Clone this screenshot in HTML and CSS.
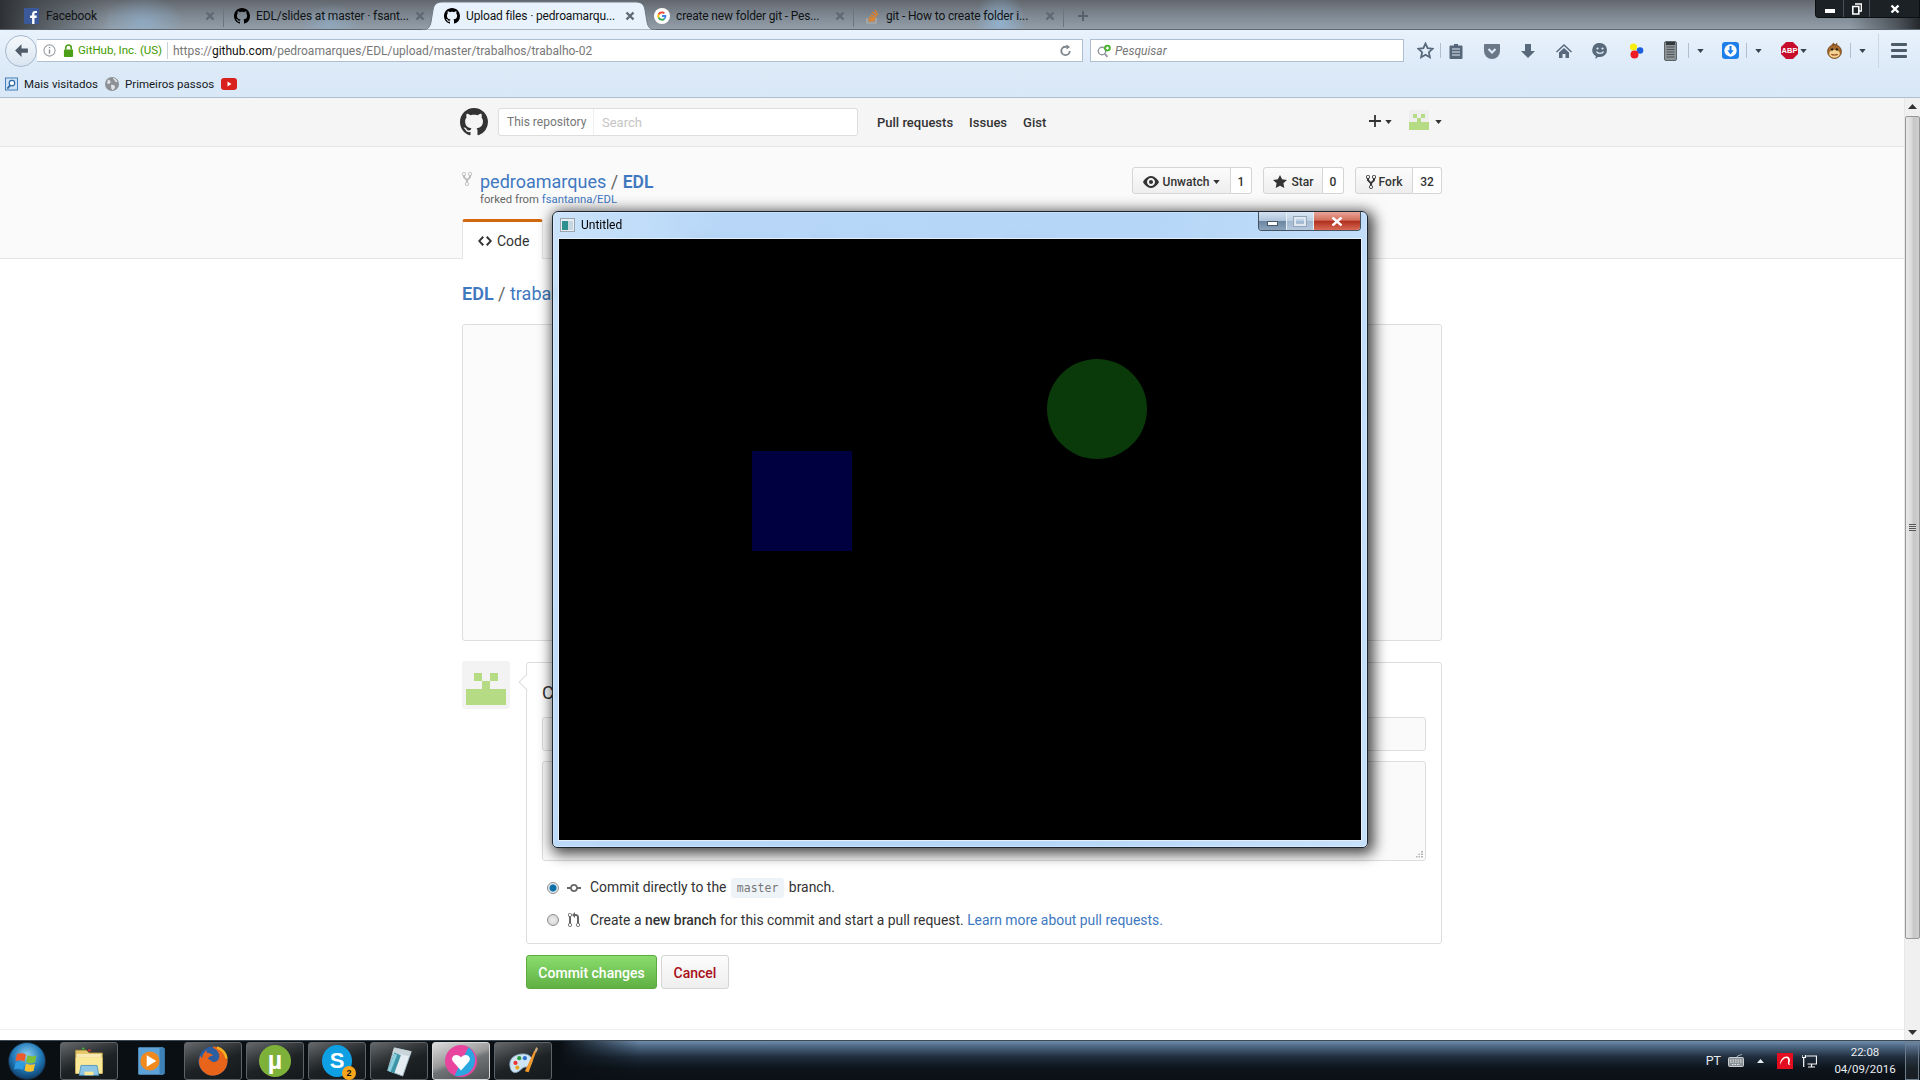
FILE: index.html
```html
<!DOCTYPE html>
<html lang="pt">
<head>
<meta charset="utf-8">
<title>Upload files · pedroamarques/EDL</title>
<link rel="stylesheet" href="styles.css">
</head>
<body>
<svg class="defs" width="0" height="0" aria-hidden="true">
  <symbol id="gh" viewBox="0 0 16 16"><path d="M8 0C3.58 0 0 3.58 0 8c0 3.54 2.29 6.53 5.47 7.59.4.07.55-.17.55-.38 0-.19-.01-.82-.01-1.49-2.01.37-2.53-.49-2.69-.94-.09-.23-.48-.94-.82-1.13-.28-.15-.68-.52-.01-.53.63-.01 1.08.58 1.23.82.72 1.21 1.87.87 2.33.66.07-.52.28-.87.51-1.07-1.78-.2-3.64-.89-3.64-3.95 0-.87.31-1.59.82-2.15-.08-.2-.36-1.02.08-2.12 0 0 .67-.21 2.2.82.64-.18 1.32-.27 2-.27.68 0 1.36.09 2 .27 1.53-1.04 2.2-.82 2.2-.82.44 1.1.16 1.92.08 2.12.51.56.82 1.27.82 2.15 0 3.07-1.87 3.75-3.65 3.95.29.25.54.73.54 1.48 0 1.07-.01 1.93-.01 2.2 0 .21.15.46.55.38A8.013 8.013 0 0016 8c0-4.42-3.58-8-8-8z"/></symbol>
  <symbol id="fork" viewBox="0 0 10 16"><path d="M8 1a1.993 1.993 0 00-1 3.72V6L5 8 3 6V4.72A1.993 1.993 0 002 1a1.993 1.993 0 00-1 3.72V6.5l3 3v1.78A1.993 1.993 0 005 15a1.993 1.993 0 001-3.72V9.5l3-3V4.72A1.993 1.993 0 008 1zM2 4.2C1.34 4.2.8 3.65.8 3c0-.65.55-1.2 1.2-1.2.65 0 1.2.55 1.2 1.2 0 .65-.55 1.2-1.2 1.2zm3 10c-.66 0-1.2-.55-1.2-1.2 0-.65.55-1.2 1.2-1.2.65 0 1.2.55 1.2 1.2 0 .65-.55 1.2-1.2 1.2zm3-10c-.66 0-1.2-.55-1.2-1.2 0-.65.55-1.2 1.2-1.2.65 0 1.2.55 1.2 1.2 0 .65-.55 1.2-1.2 1.2z"/></symbol>
  <symbol id="x" viewBox="0 0 10 10"><path d="M1.5 1.5l7 7M8.5 1.5l-7 7" stroke="#5f6973" stroke-width="2.4" fill="none"/></symbol>
  <symbol id="dd" viewBox="0 0 8 5"><path d="M0 0h8L4 5z"/></symbol>
  <symbol id="ident" viewBox="0 0 40 40"><path d="M8 8h8v8H8zM24 8h8v8h-8zM16 16h8v8h-8zM0 24h40v16H0z"/></symbol>
</svg>

<div class="screen">
  <header class="tabstrip">
    <div class="tab tab-sep">
      <svg class="fav" viewBox="0 0 16 16"><rect width="15" height="16" fill="#3b5998"/><path d="M10.5 16v-6h2l.3-2.4h-2.3V6.2c0-.7.2-1.1 1.2-1.1h1.200V3c-.3 0-1-.1-1.800-.1-1.800 0-3 1.100-3 3.100v1.600h-2V10h2v6z" fill="#fff"/></svg>
      <span class="tab-title">Facebook</span>
      <svg class="tab-x"><use href="#x"/></svg>
    </div>
    <div class="tab">
      <svg class="fav"><use href="#gh"/></svg>
      <span class="tab-title">EDL/slides at master · fsant...</span>
      <svg class="tab-x"><use href="#x"/></svg>
    </div>
    <div class="tab tab-active">
      <svg class="tab-shape" viewBox="0 0 234 30" preserveAspectRatio="none"><path d="M0 30c6 0 8-3 9-8l2-12c1-6 4-8 10-8h192c6 0 9 2 10 8l2 12c1 5 3 8 9 8z" fill="#e8f2fc" stroke="#6f7a85" stroke-width="1"/></svg>
      <svg class="fav"><use href="#gh"/></svg>
      <span class="tab-title">Upload files · pedroamarqu...</span>
      <svg class="tab-x"><use href="#x"/></svg>
    </div>
    <div class="tab tab-sep">
      <svg class="fav" viewBox="0 0 16 16"><circle cx="8" cy="8" r="8" fill="#fff"/><path d="M8 3.500a4.500 4.500 0 0 1 3 1.200l-1.300 1.300A2.700 2.700 0 0 0 5.400 7L3.900 5.800A4.500 4.500 0 0 1 8 3.500z" fill="#ea4335"/><path d="M3.900 5.800L5.400 7a2.800 2.800 0 0 0 0 2L3.900 10.200a4.500 4.500 0 0 1 0-4.400z" fill="#fbbc05"/><path d="M5.400 9A2.700 2.700 0 0 0 9.700 10.200L11 11.400A4.500 4.500 0 0 1 3.900 10.200z" fill="#34a853"/><path d="M8 7.100h4.300a4.600 4.600 0 0 1-1.300 4.300L9.700 10.200c.4-.3.600-.7.800-1.300H8z" fill="#4285f4"/></svg>
      <span class="tab-title">create new folder git - Pes...</span>
      <svg class="tab-x"><use href="#x"/></svg>
    </div>
    <div class="tab tab-sep">
      <svg class="fav" viewBox="0 0 16 16"><path d="M3 10v5h9v-5" fill="none" stroke="#b5b2a8" stroke-width="1.200"/><path d="M4.500 12.500h6M4.700 10.800l6 .5M5.300 8.800l5.800 1.500M6.500 6.500l5.300 2.800M8.500 4l4.300 4M11 2l2.800 5" stroke="#e58325" stroke-width="1.300" fill="none"/></svg>
      <span class="tab-title">git - How to create folder i...</span>
      <svg class="tab-x"><use href="#x"/></svg>
    </div>
    <svg class="newtab" viewBox="0 0 12 12"><path d="M6 1v10M1 6h10" stroke="#56616c" stroke-width="2"/></svg>
    <div class="winctl">
      <span class="wc wc-min"><i></i></span>
      <span class="wc wc-max"><svg viewBox="0 0 10 12"><path d="M3 1h6.500v7H7M.8 3.500h6v7.500h-6z" fill="none" stroke="#fff" stroke-width="1.600"/></svg></span>
      <span class="wc wc-close"><svg viewBox="0 0 10 10"><path d="M1.500 1.500l7 7M8.500 1.500l-7 7" stroke="#fff" stroke-width="2.400"/></svg></span>
    </div>
  </header>

  <nav class="toolbar">
    <span class="backbtn"><svg viewBox="0 0 16 16"><path d="M8 2L2 8l6 6v-4h6V6H8z" fill="#4f5b68"/></svg></span>
    <div class="urlbar">
      <svg class="ub-info" viewBox="0 0 14 14"><circle cx="7" cy="7" r="6" fill="none" stroke="#9aa0a6" stroke-width="1.200"/><path d="M7 6v4.500M7 3.200v1.500" stroke="#8a9096" stroke-width="1.500"/></svg>
      <svg class="ub-lock" viewBox="0 0 12 14"><path d="M3 6V4a3 3 0 0 1 6 0v2" fill="none" stroke="#4c9f17" stroke-width="1.800"/><rect x="1" y="6" width="10" height="8" rx="1" fill="#4c9f17"/></svg>
      <span class="ub-org">GitHub, Inc. (US)</span>
      <span class="ub-url">https://<b>github.com</b>/pedroamarques/EDL/upload/master/trabalhos/trabalho-02</span>
      <svg class="ub-reload" viewBox="0 0 14 14"><path d="M11.500 7.500A4.500 4.500 0 1 1 7 3h1.500" fill="none" stroke="#7d858d" stroke-width="2"/><path d="M8 .5l4 2.700L8 6z" fill="#7d858d"/></svg>
    </div>
    <div class="searchbar">
      <svg class="sb-ico" viewBox="0 0 18 16"><circle cx="6" cy="8" r="4.500" fill="none" stroke="#8c949c" stroke-width="1.600"/><path d="M9.500 11.500l3 3.500" stroke="#8c949c" stroke-width="2"/><circle cx="12.500" cy="4.500" r="4" fill="#48b02c"/><path d="M12.500 2.500v4M10.500 4.500h4" stroke="#fff" stroke-width="1.300"/></svg>
      <span class="sb-text">Pesquisar</span>
    </div>
    <div class="tools">
      <span class="ti w30"><svg class="i18" viewBox="0 0 16 16"><path d="M8 1.500l2 4.300 4.600.6-3.400 3.200.9 4.700L8 12l-4.100 2.300.9-4.700L1.400 6.400 6 5.800z" fill="none" stroke="#58697b" stroke-width="1.700"/></svg></span>
      <span class="tsep"></span>
      <span class="ti w30"><svg class="i16" viewBox="0 0 14 16"><path d="M5 1h4v1.500h3.500a1 1 0 0 1 1 1V15a1 1 0 0 1-1 1h-11a1 1 0 0 1-1-1V3.500a1 1 0 0 1 1-1H5z" fill="#56677a"/><path d="M3 6h8M3 9h8M3 12h8" stroke="#dde9f5"/></svg></span>
      <span class="ti w36 ml3"><svg class="i16" viewBox="0 0 16 16"><path d="M1 1h14a1 1 0 0 1 1 1v6a8 8 0 0 1-16 0V2a1 1 0 0 1 1-1z" fill="#6a7786"/><path d="M4.500 6L8 9.500 11.500 6" fill="none" stroke="#dbe8f5" stroke-width="2.200"/></svg></span>
      <span class="ti w36"><svg class="i16" viewBox="0 0 16 16"><path d="M5 1h6v7h4l-7 7-7-7h4z" fill="#58697b"/></svg></span>
      <span class="ti w36"><svg class="i16" viewBox="0 0 16 16"><path d="M8 1L0 8.500l1 1L8 3l7 6.500 1-1zM3 9.500V15h3.500v-4h3v4H13V9.500L8 5z" fill="#58697b"/></svg></span>
      <span class="ti w36"><svg class="i16" viewBox="0 0 16 16"><path d="M8 0a7 7 0 0 1 0 14H6l-2.500 2 .3-3A7 7 0 0 1 8 0z" fill="#58697b"/><circle cx="5.500" cy="5.500" r="1.100" fill="#e2edf8"/><circle cx="10.500" cy="5.500" r="1.100" fill="#e2edf8"/><path d="M4.500 8.500c1 2.500 6 2.500 7 0" fill="none" stroke="#e2edf8" stroke-width="1.300"/></svg></span>
      <span class="ti w35"><svg class="i16" viewBox="0 0 16 16"><circle cx="5.500" cy="4" r="3.600" fill="#f7ee10"/><circle cx="12" cy="7.500" r="3.300" fill="#1a5fe0"/><circle cx="6.500" cy="11.500" r="4" fill="#ee1c25"/></svg></span>
      <span class="ti w35"><svg class="i20" viewBox="0 0 13 20"><rect x=".5" y=".5" width="12" height="19" rx="1.500" fill="#8e9598" stroke="#5d6467"/><rect x="2" y="1" width="9" height="3" fill="#33383b"/><path d="M2.500 6h8M2.500 8.500h8M2.500 11h8M2.500 13.500h8M2.500 16h8" stroke="#4c5357"/></svg></span>
      <span class="tsep"></span>
      <span class="ti w20"><svg class="dd"><use href="#dd"/></svg></span>
      <span class="ti w32 ml3"><svg class="i18" viewBox="0 0 16 16"><rect width="16" height="16" rx="3" fill="#1e7fe8"/><circle cx="8" cy="8" r="5.800" fill="#fff"/><path d="M7 3.800h2v4h2L8 11.800 5 7.800h2z" fill="#1e7fe8"/></svg></span>
      <span class="tsep"></span>
      <span class="ti w20"><svg class="dd"><use href="#dd"/></svg></span>
      <span class="ti abp-slot"><span class="abp">ABP</span><svg class="dd"><use href="#dd"/></svg></span>
      <span class="ti w32 ml3"><svg class="i18" viewBox="0 0 16 16"><path d="M5 3L7 .5 8.500 2.500 10.500 .5 10.500 3z" fill="#8a5a25"/><circle cx="8" cy="9" r="6.500" fill="#a5682a" stroke="#6c4218" stroke-width=".8"/><ellipse cx="8" cy="11" rx="5" ry="3.800" fill="#f5d28f"/><circle cx="5.800" cy="7" r="1.100" fill="#221"/><circle cx="10.200" cy="7" r="1.100" fill="#221"/><path d="M5 11.500c1.500 1 4.500 1 6 0" stroke="#8a3a18" fill="none"/></svg></span>
      <span class="tsep"></span>
      <span class="ti w20"><svg class="dd"><use href="#dd"/></svg></span>
      <span class="tsep tsep-tall"></span>
      <span class="menu"><i></i><i></i><i></i></span>
    </div>
  </nav>

  <div class="bookmarks">
    <svg class="bm-ico" viewBox="0 0 14 14"><rect x=".5" y=".5" width="13" height="13" fill="#cfe2f5" stroke="#3d78b5"/><circle cx="7.500" cy="6" r="3" fill="#fff" stroke="#2b66a5" stroke-width="1.300"/><path d="M5.500 8.500L2.500 12" stroke="#2b66a5" stroke-width="1.800"/></svg>
    <span class="bm-label">Mais visitados</span>
    <svg class="bm-ico bm-globe" viewBox="0 0 14 14"><circle cx="7" cy="7" r="7" fill="#8d9195"/><path d="M3 2.500c2 .5 3 1.500 2.500 3S3 7 2 6.500zM8 1c2 0 4 2 4.500 4-1.500.5-2.500-.5-3-1.500S8 2 8 1zM6 8c2-.5 4 .5 4 2s-1.500 3-2.500 3S6 10 6 8z" fill="#dfe3e6"/></svg>
    <span class="bm-label">Primeiros passos</span>
    <svg class="bm-yt" viewBox="0 0 16 12"><rect width="16" height="12" rx="3" fill="#d8201d"/><path d="M6.500 3.500l4 2.500-4 2.500z" fill="#fff"/></svg>
  </div>

  <div class="viewport">
    <main class="page">
      <div class="gh-header">
        <div class="container header-row">
          <svg class="gh-logo"><use href="#gh"/></svg>
          <div class="gh-search">
            <span class="scope">This repository</span>
            <span class="search-ph">Search</span>
          </div>
          <a class="gh-nav first">Pull requests</a>
          <a class="gh-nav">Issues</a>
          <a class="gh-nav">Gist</a>
          <svg class="gh-plus" viewBox="0 0 12 12"><path d="M6 0v12M0 6h12" stroke="#333" stroke-width="1.800"/></svg>
          <svg class="caret"><use href="#dd"/></svg>
          <svg class="mini-avatar"><use href="#ident"/></svg>
          <svg class="caret"><use href="#dd"/></svg>
        </div>
      </div>

      <div class="repohead">
        <div class="container">
          <div class="repo-row">
            <div class="repo-title">
              <svg class="repo-fork"><use href="#fork"/></svg>
              <div>
                <h1 class="repo-name"><a>pedroamarques</a> <span class="slash">/</span> <a><b>EDL</b></a></h1>
                <p class="forked">forked from <a>fsantanna/EDL</a></p>
              </div>
            </div>
            <div class="repo-actions">
              <div class="btngrp"><span class="btn btn-watch"><svg class="b-eye" viewBox="0 0 16 16"><path d="M8.060 2C3 2 0 8 0 8s3 6 8.060 6C13 14 16 8 16 8s-3-6-7.940-6zM8 12c-2.200 0-4-1.780-4-4 0-2.200 1.800-4 4-4 2.220 0 4 1.800 4 4 0 2.220-1.780 4-4 4zm2-4c0 1.110-.89 2-2 2-1.110 0-2-.89-2-2 0-1.110.89-2 2-2 1.110 0 2 .89 2 2z"/></svg>Unwatch<svg class="caret b-caret"><use href="#dd"/></svg></span><span class="count c-watch">1</span></div>
              <div class="btngrp"><span class="btn btn-star"><svg class="b-star" viewBox="0 0 14 16"><path d="M14 6l-4.900-.64L7 1 4.900 5.360 0 6l3.600 3.260L2.670 14 7 11.670 11.330 14l-.93-4.740L14 6z"/></svg>Star</span><span class="count c-star">0</span></div>
              <div class="btngrp"><span class="btn btn-fork"><svg class="b-fork"><use href="#fork"/></svg>Fork</span><span class="count c-fork">32</span></div>
            </div>
          </div>
          <div class="repo-tabs">
            <a class="rtab rtab-on"><svg class="rt-code" viewBox="0 0 14 16"><path d="M9.500 3L8 4.500 11.500 8 8 11.500 9.500 13 14 8 9.500 3zm-5 0L0 8l4.500 5L6 11.500 2.500 8 6 4.500 4.500 3z"/></svg>Code</a>
            <a class="rtab">Pull requests 0</a>
            <a class="rtab">Wiki</a>
            <a class="rtab">Pulse</a>
            <a class="rtab">Graphs</a>
            <a class="rtab">Settings</a>
          </div>
        </div>
      </div>

      <div class="container">
        <div class="crumb"><a><b>EDL</b></a> <span class="slash">/</span> <a>trabalhos</a> <span class="slash">/</span> <a>trabalho-02</a></div>
        <div class="dropzone"></div>
        <div class="commit">
          <div class="avatar"><svg class="avatar-img"><use href="#ident"/></svg></div>
          <div class="commit-col">
            <form class="commit-form">
              <h3 class="commit-h">Commit changes</h3>
              <div class="fake-input"></div>
              <div class="fake-area"><svg class="grip" viewBox="0 0 7 7"><path d="M5 0h2v1.500H5zM2.500 2.500h1.500V4H2.500zM5 2.500h2V4H5zM0 5h1.500v1.500H0zM2.500 5h1.500v1.500H2.500zM5 5h2v1.500H5z" fill="#b5b5b5"/></svg></div>
              <div class="radio-row first-radio">
                <span class="radio radio-on"></span>
                <svg class="r-ico" viewBox="0 0 14 16"><path d="M10.860 7c-.45-1.720-2-3-3.860-3-1.860 0-3.410 1.280-3.860 3H0v2h3.140c.45 1.720 2 3 3.860 3 1.860 0 3.410-1.280 3.860-3H14V7h-3.140zM7 10.200c-1.220 0-2.200-.98-2.200-2.200 0-1.220.98-2.200 2.200-2.200 1.220 0 2.200.98 2.200 2.200 0 1.220-.98 2.200-2.200 2.200z"/></svg>
                <span>Commit directly to the <code class="branch">master</code> branch.</span>
              </div>
              <div class="radio-row">
                <span class="radio"></span>
                <svg class="r-ico r-pr" viewBox="0 0 12 16"><path d="M11 11.280V5c-.03-.78-.34-1.470-.94-2.060C9.460 2.350 8.780 2.030 8 2H7V0L4 3l3 3V4h1c.27.02.48.11.69.31.21.2.3.42.31.69v6.280A1.993 1.993 0 0010 15a1.993 1.993 0 001-3.720zm-1 2.920c-.66 0-1.200-.55-1.200-1.200 0-.65.55-1.200 1.200-1.200.65 0 1.200.55 1.200 1.200 0 .65-.55 1.200-1.200 1.200zM4 3c0-1.110-.89-2-2-2a1.993 1.993 0 00-1 3.720v6.560A1.993 1.993 0 002 15a1.993 1.993 0 001-3.720V4.720c.59-.34 1-.98 1-1.720zm-.8 10c0 .66-.55 1.200-1.200 1.200-.65 0-1.200-.55-1.200-1.200 0-.65.55-1.200 1.200-1.200.65 0 1.200.55 1.200 1.200zM2 4.200C1.340 4.200.8 3.650.8 3c0-.65.55-1.200 1.200-1.200.65 0 1.200.55 1.200 1.200 0 .65-.55 1.200-1.200 1.200z"/></svg>
                <span>Create a <b>new branch</b> for this commit and start a pull request. <a class="link">Learn more about pull requests.</a></span>
              </div>
            </form>
            <div class="form-actions">
              <span class="btn-primary">Commit changes</span>
              <span class="btn-cancel">Cancel</span>
            </div>
          </div>
        </div>
      </div>
      <div class="page-foot"></div>
    </main>
    <aside class="scrollbar">
      <svg class="sb-arrow" viewBox="0 0 9 5"><path d="M4.500 0L9 5H0z"/></svg>
      <div class="thumb"><span class="thumb-grip"></span></div>
      <svg class="sb-arrow" viewBox="0 0 9 5"><path d="M0 0h9L4.500 5z"/></svg>
    </aside>
  </div>

  <footer class="taskbar">
    <svg class="orb" viewBox="0 0 38 38">
      <defs><radialGradient id="orbg" cx=".5" cy=".35" r=".7"><stop offset="0" stop-color="#8fd0f0"/><stop offset=".55" stop-color="#1f78b8"/><stop offset="1" stop-color="#0b2f55"/></radialGradient></defs>
      <circle cx="19" cy="19" r="18.500" fill="url(#orbg)" stroke="#16293d"/>
      <path d="M9 12c3-1 6-1 9 .5l-1.500 7c-3-1.500-6-1.500-9-.5z" fill="#ef5a2a"/>
      <path d="M19.500 13c3 1.500 6 1.500 9 .5l-1.500 7c-3 1-6 1-9-.5z" fill="#7cbf3a"/>
      <path d="M7.500 20.500c3-1 6-1 9 .5l-1.500 7c-3-1.500-6-1.500-9-.5z" fill="#2f9be0"/>
      <path d="M18 21.500c3 1.500 6 1.500 9 .5l-1.500 7c-3 1-6 1-9-.5z" fill="#f8c22e"/>
    </svg>
    <span class="tb tb-btn"><svg class="tb-ico" viewBox="0 0 34 36"><path d="M2 6h12l3 3h15v23H2z" fill="#e5c76a" stroke="#b89a44"/><path d="M3 10h28v4H3z" fill="#f6e9b2"/><rect x="9" y="3" width="3" height="2" fill="#3fae3c"/><rect x="16" y="5" width="3" height="2" fill="#d33"/><path d="M2 14h30v18H2z" fill="#fbe99a"/><path d="M8 23h18l2 11H6z" fill="#8ec6e6" stroke="#4f93bb"/><path d="M12 30h10v4H12z" fill="#fbe99a"/></svg></span>
    <span class="tb tb-plain"><svg class="tb-ico" viewBox="0 0 30 30"><rect x="3" y="2" width="24" height="26" rx="1" fill="#5da3d8"/><rect x="23" y="3" width="5" height="24" fill="#3d80b5"/><circle cx="14" cy="15" r="9" fill="#f08a1e"/><path d="M11 9.500l9 5.500-9 5.500z" fill="#fff"/></svg></span>
    <span class="tb tb-btn"><svg class="tb-ico" viewBox="0 0 32 32"><circle cx="16" cy="16" r="14.500" fill="#2b5ea0"/><path d="M16 1.500a14.500 14.500 0 0 1 13 21c-4 8-15 10.500-21 5.500-6-4-7.500-12-4.500-17 .5 1 1 1.500 1.500 2 .5-3 2-6 5-8-1 2.500 0 3 1 3 2 0 4 1 5 3-3-.5-5 1-5 3 3 .5 3 3 6 3 4 0 6-4 5-8-1-3-3-5-6-6z" fill="#e8641b"/><path d="M20 2.500c5 1.500 9 6 9.500 11" stroke="#f6b01e" stroke-width="2.500" fill="none"/></svg></span>
    <span class="tb tb-btn"><span class="utorrent">µ</span></span>
    <span class="tb tb-btn"><span class="skype">S<em>2</em></span></span>
    <span class="tb tb-btn"><svg class="tb-ico" viewBox="0 0 32 34"><path d="M11 3l18 4-9 26-16-6z" fill="#e4eef2" stroke="#9fb6c2"/><path d="M11 3l18 4-2 5-18-4z" fill="#c9d5da"/><path d="M4 27L11 8l7 3-7 19z" fill="#3f95a8"/><path d="M11 9l3 1.500-7 18-3-1.500z" fill="#8bd0de"/></svg></span>
    <span class="tb tb-btn tb-on"><svg class="tb-ico" viewBox="0 0 30 30"><circle cx="15" cy="15" r="15" fill="#e8459f"/><path d="M22 2A15 15 0 0 1 9 28.500z" fill="#2aa6e0"/><path d="M15 24L7.500 15.500c-3-4 2.500-9 7.500-4 5-5 10.500 0 7.500 4z" fill="#fff"/></svg></span>
    <span class="tb tb-btn"><svg class="tb-ico" viewBox="0 0 34 32"><path d="M3 19C3 11 13 7 21 9c6 2 7 7 4 11s-6 1-9 4-6 5-9 4-4-5-4-9z" fill="#cfe4f2" stroke="#8aa9c0"/><circle cx="9" cy="18" r="2.200" fill="#e33"/><circle cx="13" cy="13" r="2.200" fill="#2c9b3f"/><circle cx="19" cy="13" r="2.200" fill="#2d6fd0"/><circle cx="11" cy="23" r="2.200" fill="#e8a51e"/><path d="M19 27L29 5l2 1-8 22z" fill="#f0982a"/><path d="M29 6l2-5 2 2-2 4z" fill="#c9a77a"/></svg></span>
    <div class="tray">
      <span class="tray-lang">PT</span>
      <svg class="tray-kb" viewBox="0 0 16 13"><path d="M9 3c0-2 3-1 5-3" fill="none" stroke="#b5bcc2"/><rect x=".5" y="3.500" width="15" height="9" rx="1" fill="#8b9297" stroke="#c6ccd1"/><path d="M2 6h12M2 8h12M4 10.500h8" stroke="#e3e6e8" stroke-dasharray="1.500 1"/></svg>
      <svg class="tray-up" viewBox="0 0 7 4"><path d="M3.500 0L7 4H0z" fill="#e8edf2"/></svg>
      <svg class="tray-av" viewBox="0 0 16 16"><rect width="16" height="16" fill="#e30d1f"/><path d="M3 12C3 6 7 3 10 3.500c3 .5 3.500 4 2.500 6-.5 1 0 2 1 2.500-2 .5-3-1-2.500-3 .5-2 0-4-2-4S4.500 8 3 12z" fill="#fff"/></svg>
      <svg class="tray-net" viewBox="0 0 15 14"><path d="M4.500 2h10v8h-9" fill="none" stroke="#f2f4f6" stroke-width="1.200"/><path d="M6 13h7M9.500 10v3" stroke="#f2f4f6" stroke-width="1.200"/><path d="M0 1v2.500h3.500V1M1.700 3.500V13" fill="none" stroke="#fff" stroke-width="1.200"/></svg>
      <div class="clock"><span>22:08</span><span>04/09/2016</span></div>
      <span class="showdesk"></span>
    </div>
  </footer>

  <section class="win">
    <div class="win-title">
      <svg class="win-ico" viewBox="0 0 15 14"><rect x=".5" y=".5" width="14" height="13" fill="#e8eef4" stroke="#9aa5af"/><rect x="2" y="3" width="6" height="9" fill="#2f8f8f"/><rect x="8" y="3" width="5" height="9" fill="#c7d6df"/></svg>
      <span class="win-name">Untitled</span>
      <div class="win-ctl">
        <span class="wb wb-min"><i></i></span>
        <span class="wb wb-max"><i></i></span>
        <span class="wb wb-close"><svg viewBox="0 0 12 9"><path d="M1.500 .5l9 8M10.500 .5l-9 8" stroke="#fff" stroke-width="2.400"/></svg></span>
      </div>
    </div>
    <div class="win-client">
      <svg class="scene" viewBox="0 0 802 601">
        <circle cx="538" cy="170" r="50" fill="#0a3a0a"/>
        <rect x="193" y="212" width="100" height="100" fill="#000040"/>
      </svg>
    </div>
  </section>
</div>
</body>
</html>
```

FILE: styles.css
```css
* { box-sizing: border-box; }
html, body { margin: 0; padding: 0; }
body { background: #fff; font-family: Roboto, "Noto Sans", "Liberation Sans", sans-serif; color: #333; }
svg { display: block; flex: none; }
a { color: #4078c0; text-decoration: none; }
.defs { position: absolute; }

.screen { position: relative; width: 1920px; height: 1080px; overflow: hidden; display: flex; flex-direction: column; }

/* browser tab strip */
.tabstrip {
  height: 30px; flex: none; display: flex; align-items: center; padding-left: 14px;
  border-bottom: 1px solid #5f6770;
  background:
    radial-gradient(ellipse 40px 26px at 143px 22px, rgba(150,195,235,.45), transparent),
    radial-gradient(ellipse 30px 20px at 330px 24px, rgba(150,195,235,.35), transparent),
    radial-gradient(ellipse 26px 30px at 1000px 22px, rgba(150,195,235,.6), transparent),
    linear-gradient(90deg, #2e3134 0, rgba(60,64,68,.8) 30px, transparent 110px),
    linear-gradient(270deg, #24282c 0, rgba(40,44,48,.6) 24px, transparent 70px),
    linear-gradient(180deg, #62676e 0, #7f8993 55%, #929ea9 100%);
}
.tab { position: relative; width: 210px; height: 30px; flex: none; display: flex; align-items: center; padding: 2px 0 0 10px; gap: 6px; font-size: 12px; color: #101214; }
.tab-sep::after { content: ""; position: absolute; right: 0; top: 5px; bottom: 3px; width: 1px; background: #6c747c; }
.tab-shape { position: absolute; left: -12px; top: 0; width: 234px; height: 30px; }
.fav { position: relative; width: 16px; height: 16px; }
.tab-title { position: relative; flex: 1; white-space: nowrap; letter-spacing: -.15px; }
.tab-x { position: relative; width: 10px; height: 10px; margin-right: 9px; }
.newtab { width: 12px; height: 12px; margin: 2px 0 0 13px; }
.winctl { margin-left: auto; align-self: flex-start; width: 105px; height: 18px; display: flex; background: #1c2125; border: 1px solid #0c0f12; border-top: 0; border-radius: 0 0 0 4px; }
.wc { height: 100%; display: flex; align-items: center; justify-content: center; border-right: 1px solid #4a5056; }
.wc-min { width: 28px; }
.wc-min i { width: 10px; height: 4px; background: #fff; margin-top: 4px; }
.wc-max { width: 26px; }
.wc-max svg { width: 10px; height: 12px; }
.wc-close { flex: 1; border-right: 0; }
.wc-close svg { width: 10px; height: 10px; }

/* navigation toolbar */
.toolbar { height: 41px; flex: none; display: flex; align-items: center; padding-left: 5px; background: linear-gradient(180deg, #e8f2fc, #dce9f7); }
.backbtn { width: 32px; height: 32px; border-radius: 50%; border: 1px solid #a6b8ca; background: linear-gradient(180deg, #f4f8fc, #d9e5f1); display: flex; align-items: center; justify-content: center; position: relative; z-index: 1; flex: none; }
.backbtn svg { width: 17px; height: 17px; }
.urlbar { width: 1046px; height: 23px; display: flex; align-items: center; background: #fff; border: 1px solid #aebfd2; border-left: 0; font-size: 12px; flex: none; }
.ub-info { width: 13px; height: 13px; margin-left: 6px; }
.ub-lock { width: 11px; height: 13px; margin-left: 7px; }
.ub-org { color: #3f9a00; font-size: 11.500px; margin-left: 4px; width: 90px; height: 17px; line-height: 17px; border-right: 1px solid #c9d2db; white-space: nowrap; }
.ub-url { color: #777; margin-left: 5px; white-space: nowrap; }
.ub-url b { color: #111; font-weight: 400; }
.ub-reload { width: 13px; height: 13px; margin-left: auto; margin-right: 10px; }
.searchbar { width: 314px; height: 23px; margin-left: 7px; display: flex; align-items: center; background: #fff; border: 1px solid #aebfd2; flex: none; padding-left: 6px; }
.sb-ico { width: 15px; height: 14px; }
.sb-text { font-size: 12px; font-style: italic; color: #777; margin-left: 3px; }
.tools { display: flex; align-items: center; margin-left: 6px; height: 100%; }
.ti { display: flex; align-items: center; justify-content: center; flex: none; height: 24px; }
.w20 { width: 22px; } .w30 { width: 30px; } .w32 { width: 32px; } .w35 { width: 35px; } .w36 { width: 36px; }
.ml3 { margin-left: 3px; }
.tsep { width: 1px; height: 15px; background: #b1c0cf; flex: none; }
.tsep-tall { height: 34px; margin-left: 5px; background: #cad8e6; }
.i16 { width: 16px; height: 16px; } .i18 { width: 17px; height: 17px; } .i20 { width: 13px; height: 20px; }
.dd { width: 7px; height: 4px; fill: #39434d; }
.abp-slot { width: 37px; gap: 2px; justify-content: flex-start; padding-left: 2px; margin-left: 10px; margin-right: -1px; }
.abp { width: 17px; height: 17px; background: #c70d2c; color: #fff; font: 700 7.500px/17px "Liberation Sans", sans-serif; text-align: center; clip-path: polygon(30% 0, 70% 0, 100% 30%, 100% 70%, 70% 100%, 30% 100%, 0 70%, 0 30%); }
.menu { width: 16px; display: flex; flex-direction: column; gap: 3px; margin-left: 12px; flex: none; }
.menu i { height: 3px; border-radius: 1px; background: #4e5c6a; }

/* bookmarks */
.bookmarks { height: 27px; flex: none; display: flex; align-items: center; padding-left: 5px; font-size: 11.500px; color: #14181c; background: linear-gradient(180deg, #dce9f7, #d9e8f7); border-bottom: 1px solid #aebfd2; }
.bm-ico { width: 13px; height: 14px; }
.bm-label { margin-left: 6px; white-space: nowrap; }
.bm-globe { margin-left: 7px; width: 14px; }
.bm-yt { width: 16px; height: 12px; margin-left: 7px; }

/* page viewport */
.viewport { flex: 1; min-height: 0; display: flex; }
.page { flex: 1; min-width: 0; overflow: hidden; font-size: 13px; }
.container { width: 980px; margin: 0 auto; }

.gh-header { height: 49px; background: #f5f5f5; border-bottom: 1px solid #e5e5e5; }
.header-row { height: 48px; display: flex; align-items: center; }
.gh-logo { width: 28px; height: 28px; margin-left: -2px; fill: #333; }
.gh-search { width: 360px; height: 28px; margin-left: 10px; display: flex; align-items: center; background: #fff; border: 1px solid #ddd; border-radius: 3px; font-size: 12px; }
.scope { width: 95px; height: 100%; line-height: 27px; padding-left: 8px; color: #767676; border-right: 1px solid #eee; white-space: nowrap; }
.search-ph { margin: 1px 0 0 8px; color: #c5c5c5; font-size: 13px; }
.gh-nav { margin: 1px 0 0 16px; color: #333; font-size: 13px; font-weight: 500; }
.gh-nav.first { margin-left: 19px; }
.gh-plus { width: 12px; height: 12px; margin-left: auto; margin-top: -3px; }
.caret { width: 7px; height: 4px; fill: #333; margin-left: 4px; }
.mini-avatar { width: 20px; height: 20px; fill: #b5db84; margin-left: 17px; margin-top: -4px; background: #eee; }
.mini-avatar + .caret { margin-left: 6px; }

.repohead { height: 112px; background: #fafafa; border-bottom: 1px solid #e5e5e5; }
.repo-row { height: 72px; display: flex; justify-content: space-between; padding-top: 20px; }
.repo-title { display: flex; gap: 8px; }
.repo-fork { width: 10px; height: 16px; fill: #bbb; margin-top: 4px; }
.repo-name { margin: 0; font-size: 18px; font-weight: 400; line-height: 30px; height: 24px; color: #666; white-space: nowrap; }
.repo-name b { font-weight: 600; font-size: 17.500px; }
.slash { color: #666; }
.forked { margin: 2px 0 0; font-size: 11.300px; line-height: 14px; color: #666; white-space: nowrap; }
.repo-actions { display: flex; gap: 11px; }
.btngrp { display: flex; height: 27px; font-size: 12px; }
.btn { display: flex; align-items: center; justify-content: center; padding-top: 2px; color: #333; font-weight: 500; background: linear-gradient(180deg, #fcfcfc, #eee); border: 1px solid #d5d5d5; border-radius: 3px 0 0 3px; }
.count { display: flex; align-items: center; justify-content: center; padding-top: 2px; background: #fff; border: 1px solid #d5d5d5; border-left: 0; border-radius: 0 3px 3px 0; color: #333; font-weight: 500; }
.btn-watch { width: 99px; } .c-watch { width: 21px; }
.btn-star { width: 60px; } .c-star { width: 21px; }
.btn-fork { width: 58px; } .c-fork { width: 29px; }
.b-eye { width: 16px; height: 16px; fill: #333; margin-right: 4px; }
.b-star { width: 14px; height: 16px; fill: #333; margin-right: 5px; }
.b-fork { width: 10px; height: 16px; fill: #333; margin-right: 3px; }
.b-caret { margin-left: 4px; }
.repo-tabs { display: flex; height: 40px; }
.rtab { display: flex; align-items: center; padding: 0 15px; color: #666; font-size: 14px; }
.rtab-on { width: 81px; color: #333; background: #fff; border: 1px solid #e5e5e5; border-top: 3px solid #d26911; border-bottom: 0; border-radius: 3px 3px 0 0; margin-right: 130px; }
.rt-code { width: 14px; height: 16px; fill: #333; margin-right: 5px; }

.crumb { margin-top: 23px; height: 24px; line-height: 24px; font-size: 18px; white-space: nowrap; }
.crumb b { font-weight: 600; }
.dropzone { height: 317px; margin-top: 18px; background: #fbfbfb; border: 1px solid #ddd; border-radius: 3px; }
.commit { display: flex; margin-top: 20px; gap: 16px; }
.avatar { width: 48px; height: 48px; padding: 4px; background: #f3f3f3; border-radius: 3px; flex: none; }
.avatar-img { width: 40px; height: 40px; fill: #b5db84; }
.commit-col { flex: 1; min-width: 0; margin-top: 1px; }
.commit-form { position: relative; height: 282px; padding: 16px 15px 0; border: 1px solid #ddd; border-radius: 3px; background: #fff; }
.commit-form::before { content: ""; position: absolute; left: -6px; top: 13px; width: 11px; height: 11px; background: #fff; border-left: 1px solid #ddd; border-bottom: 1px solid #ddd; transform: rotate(45deg); }
.commit-h { margin: 0 0 10px; font-size: 18px; font-weight: 400; line-height: 28px; }
.fake-input { height: 34px; background: #fafafa; border: 1px solid #ddd; border-radius: 3px; }
.fake-area { position: relative; height: 100px; margin-top: 10px; background: #fafafa; border: 1px solid #ddd; border-radius: 3px; }
.grip { position: absolute; right: 2px; bottom: 2px; width: 7px; height: 7px; }
.radio-row { display: flex; align-items: center; height: 22px; margin-top: 10px; font-size: 13.900px; white-space: nowrap; }
.first-radio { margin-top: 16px; }
.radio { width: 12px; height: 12px; margin-left: 5px; border-radius: 50%; border: 1px solid #8e8f8f; background: radial-gradient(circle, #eee 0, #cfcfcf 100%); flex: none; }
.radio-on { background: radial-gradient(circle, #0b6fa8 0, #0b6fa8 3px, #dfe6ec 4px, #eef1f3 100%); }
.r-ico { width: 14px; height: 16px; margin-left: 8px; margin-right: 9px; fill: #666; }
.r-pr { width: 12px; margin-left: 9px; margin-right: 10px; }
.radio-row b { font-weight: 500; }
.branch { display: inline-block; padding: 0 6px; height: 20px; margin: 0 1px; background: #eef3f8; border-radius: 3px; color: #777; font: 11.500px/21px "DejaVu Sans Mono", "Liberation Mono", monospace; }
.form-actions { display: flex; gap: 4px; margin-top: 11px; }
.btn-primary { width: 131px; height: 34px; padding-top: 1px; display: flex; align-items: center; justify-content: center; font-size: 14px; font-weight: 500; color: #fff; background: linear-gradient(180deg, #8add6d, #60b044); border: 1px solid #5ca941; border-radius: 3px; }
.btn-cancel { width: 68px; height: 34px; padding-top: 1px; display: flex; align-items: center; justify-content: center; font-size: 14px; font-weight: 500; color: #a8101a; background: linear-gradient(180deg, #fcfcfc, #eee); border: 1px solid #d5d5d5; border-radius: 3px; }
.page-foot { margin-top: 40px; border-top: 1px solid #eee; }

/* scrollbar */
.scrollbar { width: 16px; flex: none; display: flex; flex-direction: column; align-items: center; background: #f0f0f0; border-left: 1px solid #e8e8e8; }
.sb-arrow { width: 9px; height: 5px; fill: #333; margin: 6px 0 7px; flex: none; }
.thumb { width: 15px; height: 823px; display: flex; align-items: center; justify-content: center; border: 1px solid #979797; border-radius: 2px; background: linear-gradient(90deg, #e8e8e8 0, #dcdcdc 40%, #c6c6c6 60%, #cfcfcf 100%); }
.thumb-grip { width: 7px; height: 7px; background: repeating-linear-gradient(180deg, #555 0, #555 1px, #ddd 1px, #ddd 2px); }
.scrollbar .thumb + .sb-arrow { margin-top: auto; margin-bottom: 5px; }

/* taskbar */
.taskbar {
  height: 40px; flex: none; display: flex; align-items: center; padding-left: 8px; border-top: 1px solid #3d4a56;
  background:
    linear-gradient(90deg, #0a0f14 0, #0a0f14 560px, rgba(10,15,20,0) 640px),
    linear-gradient(180deg, #6f8dab 0, #4d6783 14%, #1e2c3b 42%, #0d141b 70%, #0b1016 100%);
}
.orb { width: 38px; height: 38px; margin-right: 14px; }
.tb { width: 58px; height: 38px; margin-right: 4px; display: flex; align-items: center; justify-content: center; flex: none; border-radius: 3px; }
.tb-btn { border: 1px solid #5e6367; background: linear-gradient(160deg, #65696c 0, #34383b 35%, #1d2225 55%, #15191c 100%); }
.tb-on { border-color: #d8d8d8; background: linear-gradient(160deg, #dcdcdc 0, #9a9a9a 45%, #6f7376 55%, #4b4f52 100%); }
.tb-ico { width: 32px; height: 32px; }
.utorrent { width: 32px; height: 32px; border-radius: 50%; background: #7eb139; color: #fff; font: 700 25px/30px "Liberation Sans", sans-serif; text-align: center; }
.skype { position: relative; width: 30px; height: 32px; border-radius: 50%; background: #0fa0e4; color: #fff; font: 700 22px/31px "Liberation Sans", sans-serif; text-align: center; }
.skype em { position: absolute; right: -4px; bottom: -3px; width: 14px; height: 14px; border-radius: 50%; background: #f9a61a; color: #111; font: 700 9px/14px "Liberation Sans", sans-serif; }
.tray { margin-left: auto; display: flex; align-items: center; color: #e6ebef; font-size: 12px; }
.tray-lang { margin-right: 7px; font-size: 12.500px; }
.tray-kb { width: 16px; height: 13px; margin-right: 13px; }
.tray-up { width: 7px; height: 4px; margin-right: 13px; }
.tray-av { width: 16px; height: 16px; margin-right: 9px; }
.tray-net { width: 15px; height: 14px; margin-right: 18px; }
.clock { width: 60px; display: flex; flex-direction: column; align-items: center; line-height: 17px; font-size: 11.500px; color: #e9edf1; }
.showdesk { width: 14px; height: 38px; margin: 0 1px 0 10px; border: 1px solid #6d7c8b; background: rgba(255,255,255,.06); }

/* floating application window */
.win {
  position: absolute; left: 552px; top: 211px; width: 816px; height: 637px;
  padding: 0 6px 7px 6px; border: 1px solid #1c2530; border-radius: 6px 6px 5px 5px;
  background: linear-gradient(100deg, rgba(200,225,250,.94), rgba(178,212,247,.93) 18%, rgba(176,211,247,.93) 65%, rgba(196,223,250,.94));
  backdrop-filter: blur(3px);
  box-shadow: 3px 3px 14px 3px rgba(0,0,0,.72), inset 0 0 0 1px rgba(255,255,255,.25);
  display: flex; flex-direction: column;
}
.win-title { height: 27px; flex: none; display: flex; align-items: center; padding: 0 0 2px 1px; position: relative; }
.win-ico { width: 15px; height: 14px; }
.win-name { margin-left: 6px; font-size: 12px; color: #000; }
.win-ctl { position: absolute; right: 0; top: 0; width: 103px; height: 19px; display: flex; border: 1px solid #45525f; border-top: 0; border-radius: 0 0 4px 4px; overflow: hidden; }
.wb { display: flex; align-items: center; justify-content: center; border-right: 1px solid #e6eef6; }
.wb-min { width: 28px; background: linear-gradient(180deg, #d3e2f1 0, #aec3d9 50%, #6d86a1 52%, #8ba3bc 100%); }
.wb-min i { width: 11px; height: 5px; margin-top: 4px; background: #fff; border: 1px solid #4a5968; }
.wb-max { width: 27px; background: linear-gradient(180deg, #dae7f4 0, #bcd0e4 50%, #a3b9d0 52%, #b5c9de 100%); }
.wb-max i { width: 12px; height: 9px; border: 2px solid #dfe8f1; outline: 1px solid #93a6b9; }
.wb-close { flex: 1; border-right: 0; background: linear-gradient(180deg, #e9a598 0, #d4705e 45%, #b0301e 52%, #d86a55 100%); }
.wb-close svg { width: 12px; height: 9px; }
.win-client { flex: 1; min-height: 0; background: #000; outline: 1px solid #e2eefa; }
.scene { width: 802px; height: 601px; }
```
